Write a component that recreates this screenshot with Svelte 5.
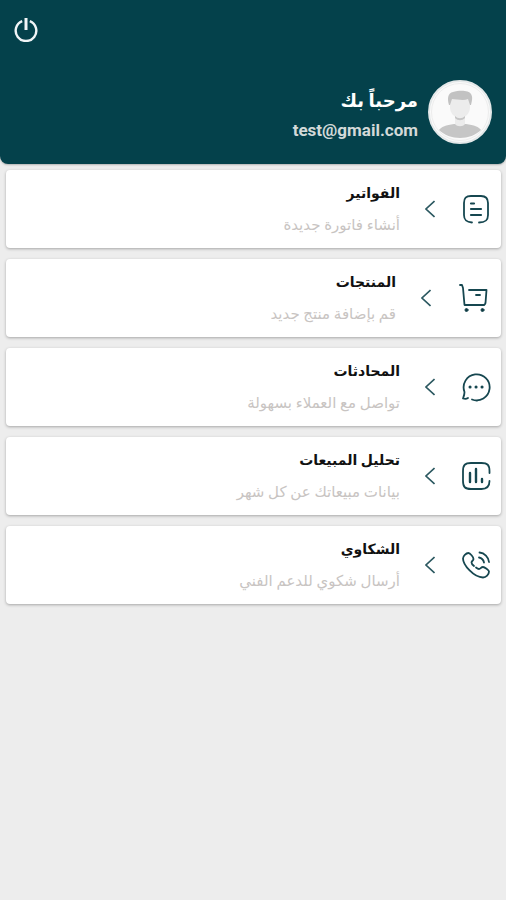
<script lang="ts">
  type IconName = 'invoice' | 'cart' | 'chat' | 'chart' | 'phone';

  interface MenuItem {
    icon: IconName;
    title: string;
    subtitle: string;
  }

  const email = 'test@gmail.com';

  const items: MenuItem[] = [
    { icon: 'invoice', title: 'الفواتير', subtitle: 'أنشاء فاتورة جديدة' },
    { icon: 'cart', title: 'المنتجات', subtitle: 'قم بإضافة منتج جديد' },
    { icon: 'chat', title: 'المحادثات', subtitle: 'تواصل مع العملاء بسهولة' },
    { icon: 'chart', title: 'تحليل المبيعات', subtitle: 'بيانات مبيعاتك عن كل شهر' },
    { icon: 'phone', title: 'الشكاوي', subtitle: 'أرسال شكوي للدعم الفني' }
  ];
</script>

<div class="screen" dir="rtl" lang="ar">
  <header class="header">
    <button class="power" type="button" aria-label="تسجيل الخروج">
      <svg viewBox="0 0 24 24" width="24" height="24" fill="none" stroke="#f1f5f7" stroke-width="2.4">
        <path d="M8.2 3.1A10.3 10.3 0 1 0 15.8 3.1" />
        <path d="M12 0v12" stroke-width="3" />
      </svg>
    </button>

    <div class="profile">
      <svg class="avatar" viewBox="0 0 64 64" width="64" height="64" aria-hidden="true">
        <circle cx="32" cy="32" r="31" fill="#fafafa" stroke="#e4e8e9" stroke-width="2" />
        <circle cx="32" cy="32" r="28.5" fill="none" stroke="#ededed" />
        <path d="M11 50c2-3 7-5 15-6h12c8 1 13 3 15 6-5 5-13 8-21 8s-16-3-21-8z" fill="#c6c6c6" />
        <path d="M27 34h10v10c-2 3-8 3-10 0z" fill="#ececec" />
        <path d="M22 19c0-4 4-6 10-6s10 2 10 6v8c0 6-4 11-10 11s-10-5-10-11z" fill="#ececec" />
        <path d="M27 36c3 3 7 3 10 0v2c-3 3-7 3-10 0z" fill="#c6c6c6" />
        <path d="M21 25c-2-7-1-12 4-13 6-2 16-2 18 2 2 3 1 7 0 11h-1l-2-6c-5 2-11 0-16 0l-2 6z" fill="#c2c2c2" />
      </svg>
      <div class="greeting">
        <h1>مرحباً بك</h1>
        <p dir="ltr">{email}</p>
      </div>
    </div>
  </header>

  <main class="menu">
    {#each items as item (item.icon)}
      <button class="card" type="button">
        <svg
          class="icon"
          class:wide={item.icon === 'cart'}
          viewBox="0 0 30 30"
          height="30"
          fill="none"
          stroke="#164750"
          stroke-width="1.8"
          stroke-linecap="round"
          stroke-linejoin="round"
          aria-hidden="true"
        >
          {#if item.icon === 'invoice'}
            <path d="M11 28.5C5 28 3 26 3 21V9c0-5 2-7 7-7h10c5 0 7 2 7 7v12c0 5-2 7.500-9 7.500" />
            <path d="M10 9.500h3M10 15h10M10 21h10" stroke-width="2.200" />
          {:else if item.icon === 'cart'}
            <path d="M1 2h2l1 3 1.500 17H25" />
            <path d="M10 7h17.500l-1 13c-.2 1-.8 2-2 2" />
            <path d="M17 12h4" />
            <circle cx="7.500" cy="27" r="1.500" fill="#123840" stroke-width="1" />
            <circle cx="23.500" cy="27" r="1.500" fill="#123840" stroke-width="1" />
          {:else if item.icon === 'chat'}
            <path d="M11 27.500A13 13 0 1 0 3.500 20C3.500 23 2.500 25 2 26.500c2 .5 3.500.5 5-.5M15 28.500h1.500" />
            <path d="M9 15h.1M15 15h.1M21 15h.1" stroke-width="3" />
          {:else if item.icon === 'chart'}
            <path d="M28.500 12V10c0-6-2-8-8-8H10c-6 0-8 2-8 8v10c0 6 2 8 8 8h10.500c5 0 8-2 8-8" />
            <path d="M9 12v9M15 8v13M21 18v3" stroke-width="2.400" />
          {:else}
            <path d="M15 17.500c1 .8 2 1.500 3 1.500 1.500 0 2-2 4-2 1.500 0 6 3 6 4.500 0 3-3 6-6 6C13 27.500 2 15 2 8.500 2 6 5 3 7.500 3 9 3 12.500 7 12.500 9c0 1.500-2 2-2 3.500 0 1 1 2.300 2.500 3.500" />
            <path d="M18 7.500c2.500.5 4.500 2.500 5 5M18.500 2.500c5 .5 9 4.500 9.500 9.500" />
          {/if}
        </svg>
        <svg class="chevron" viewBox="0 0 10 18" width="10" height="18" fill="none" stroke="#2b5860" stroke-width="1.6" aria-hidden="true">
          <path d="M9.500 1L1 9l8.500 8" />
        </svg>
        <span class="text">
          <span class="title">{item.title}</span>
          <span class="subtitle">{item.subtitle}</span>
        </span>
      </button>
    {/each}
  </main>
</div>

<style>
  :global(body) {
    margin: 0;
    background: #ededed;
  }

  .screen {
    min-height: 100vh;
    background: #ededed;
    font-family: Roboto, 'DejaVu Sans', sans-serif;
  }

  .header {
    display: flex;
    flex-direction: column;
    padding: 18px 14px 20px;
    background: #04414b;
    border-radius: 0 0 8px 8px;
    box-shadow: 0 1px 2px rgba(0, 0, 0, 0.25);
  }

  .power {
    align-self: flex-end;
    display: flex;
    padding: 0;
    border: 0;
    background: none;
    cursor: pointer;
  }

  .profile {
    display: flex;
    align-items: center;
    gap: 10px;
    margin-top: 38px;
  }

  .avatar {
    flex: none;
  }

  .greeting {
    padding-top: 4px;
  }

  .greeting h1 {
    margin: 0;
    color: #fff;
    font-size: 18px;
    line-height: 32px;
    font-weight: 700;
  }

  .greeting p {
    margin: 0;
    color: #d3d9d8;
    font-size: 17px;
    line-height: 26px;
    font-weight: 700;
  }

  .menu {
    display: flex;
    flex-direction: column;
    gap: 11px;
    padding: 6px 5px 11px 6px;
  }

  .card {
    display: flex;
    align-items: center;
    width: 100%;
    min-height: 78px;
    padding: 4px 10px;
    border: 0;
    border-radius: 4px;
    background: #fff;
    box-shadow: 0 1px 3px rgba(0, 0, 0, 0.3);
    font-family: inherit;
    text-align: start;
    cursor: pointer;
  }

  .icon {
    flex: none;
    width: 30px;
  }

  .icon.wide {
    width: 34px;
  }

  .chevron {
    flex: none;
    margin: 0 26px 0 25px;
  }

  .text {
    display: flex;
    flex-direction: column;
    min-width: 0;
  }

  .title {
    color: #111;
    font-size: 14px;
    line-height: 32px;
    font-weight: 700;
  }

  .subtitle {
    color: #c8c4c2;
    font-size: 15px;
    line-height: 32px;
  }
</style>
